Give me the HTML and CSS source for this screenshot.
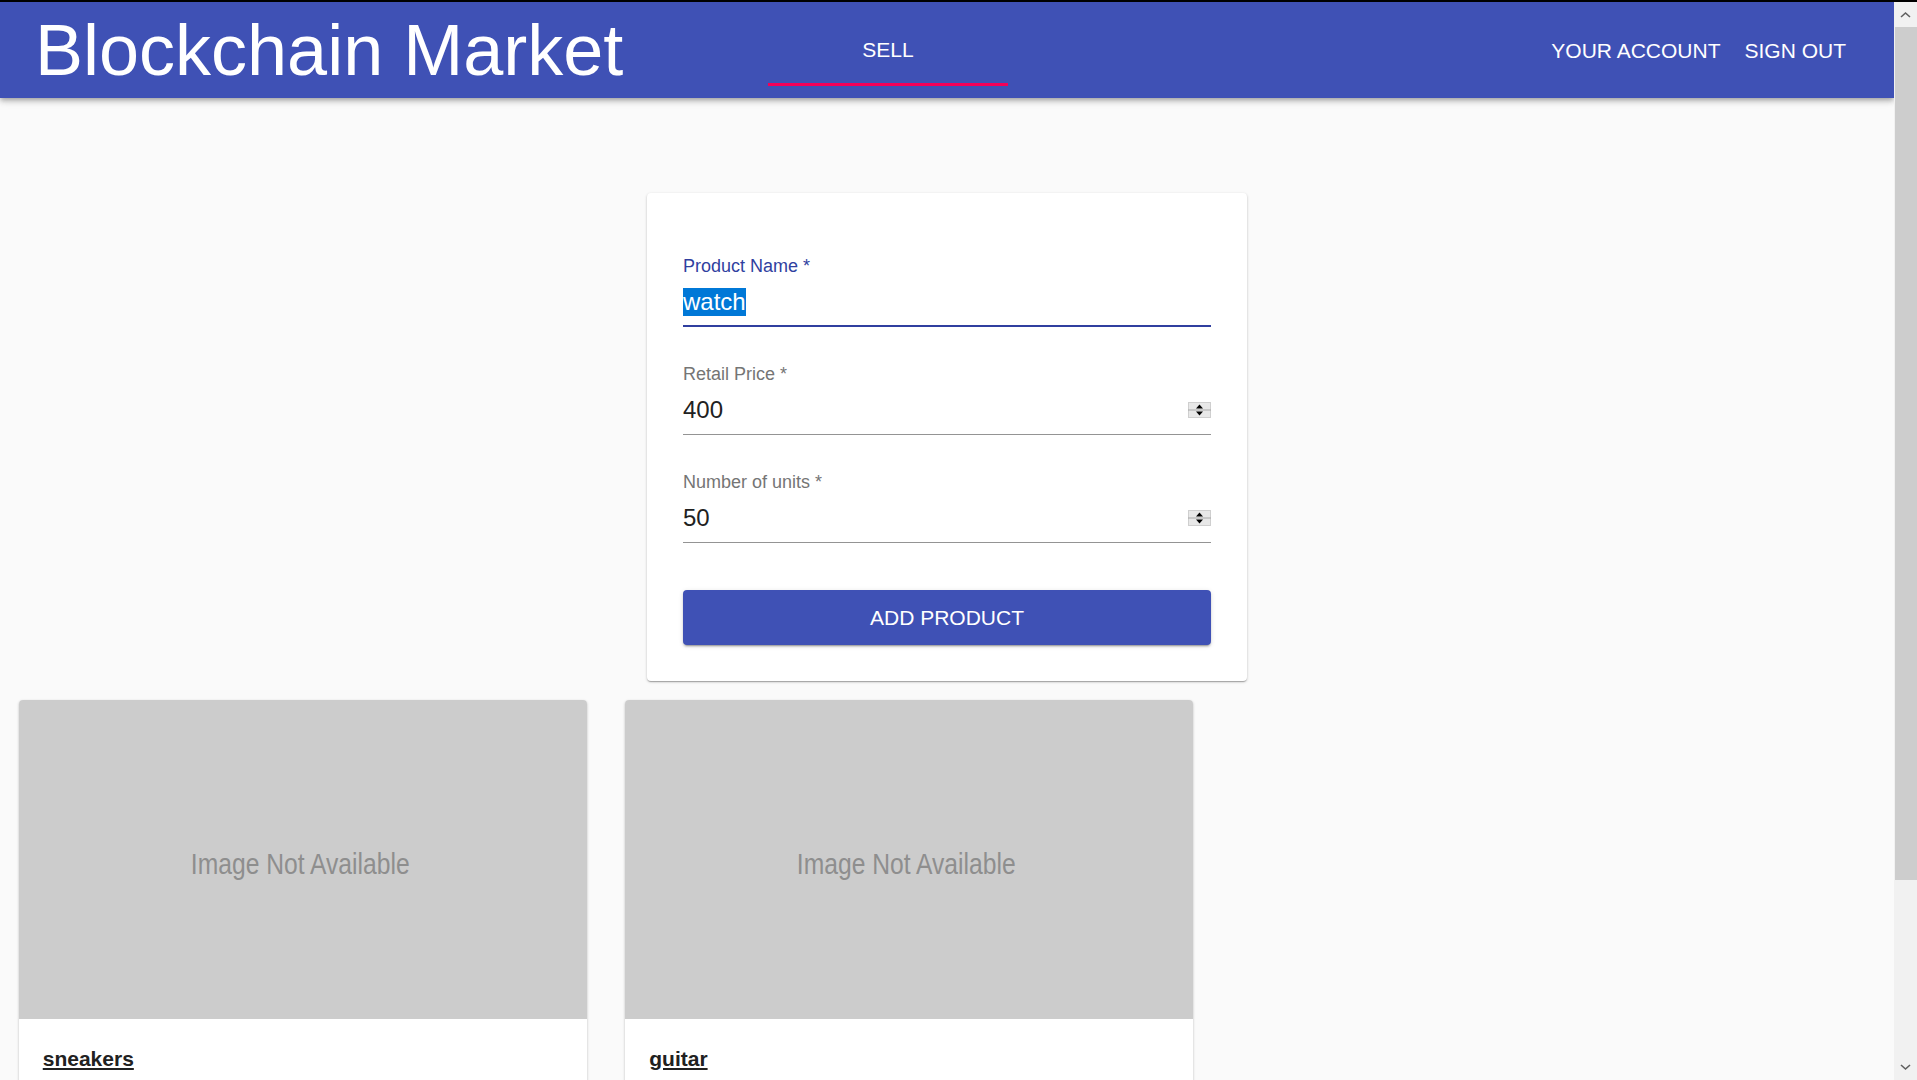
FILE: index.html
```html
<!DOCTYPE html>
<html lang="en">
<head>
<meta charset="utf-8">
<title>Blockchain Market</title>
<link rel="stylesheet" href="styles.css">
</head>
<body>
<div class="topline"></div>
<div class="window">
  <div class="page">
    <header class="appbar">
      <h1 class="brand">Blockchain Market</h1>
      <nav class="tabs"><a class="tab active" href="#">SELL</a></nav>
      <nav class="account"><a href="#">YOUR ACCOUNT</a><a href="#">SIGN OUT</a></nav>
    </header>
    <main class="content">
      <section class="form-card">
        <div class="field focused">
          <div class="label">Product Name *</div>
          <div class="input"><span class="selected">watch</span></div>
        </div>
        <div class="field">
          <div class="label">Retail Price *</div>
          <div class="input"><span>400</span>
            <svg class="spin" width="23" height="16" viewBox="0 0 23 16"><rect x="0" y="0" width="23" height="16" fill="#e8e8e8"/><rect x="0.5" y="0.5" width="22" height="15" fill="none" stroke="#cfcfcf"/><line x1="0" y1="8" x2="23" y2="8" stroke="#a8a8a8"/><path d="M11.5 2.5 L15 6.5 L8 6.5 Z" fill="#000"/><path d="M8 9.5 L15 9.5 L11.5 13.5 Z" fill="#000"/></svg>
          </div>
        </div>
        <div class="field">
          <div class="label">Number of units *</div>
          <div class="input"><span>50</span>
            <svg class="spin" width="23" height="16" viewBox="0 0 23 16"><rect x="0" y="0" width="23" height="16" fill="#e8e8e8"/><rect x="0.5" y="0.5" width="22" height="15" fill="none" stroke="#cfcfcf"/><line x1="0" y1="8" x2="23" y2="8" stroke="#a8a8a8"/><path d="M11.5 2.5 L15 6.5 L8 6.5 Z" fill="#000"/><path d="M8 9.5 L15 9.5 L11.5 13.5 Z" fill="#000"/></svg>
          </div>
        </div>
        <button class="submit" type="button">ADD PRODUCT</button>
      </section>
      <section class="products">
        <article class="product">
          <div class="placeholder"><span>Image Not Available</span></div>
          <div class="product-body"><a href="#" class="product-name">sneakers</a></div>
        </article>
        <article class="product">
          <div class="placeholder"><span>Image Not Available</span></div>
          <div class="product-body"><a href="#" class="product-name">guitar</a></div>
        </article>
      </section>
    </main>
  </div>
  <div class="scrollbar">
    <div class="sb-btn"><svg width="23" height="25" viewBox="0 0 23 25"><path d="M7 15 L11.5 11 L16 15" fill="none" stroke="#606060" stroke-width="1.6"/></svg></div>
    <div class="sb-thumb"></div>
    <div class="sb-track"></div>
    <div class="sb-btn"><svg width="23" height="25" viewBox="0 0 23 25"><path d="M7 10 L11.5 14 L16 10" fill="none" stroke="#606060" stroke-width="1.6"/></svg></div>
  </div>
</div>
</body>
</html>
```

FILE: styles.css
```css
html, body {
  margin: 0;
  height: 100%;
  overflow: hidden;
}

body {
  font-family: "Liberation Sans", Arial, sans-serif;
  background: #000;
}

.topline {
  height: 2px;
  background: #000;
}

.window {
  display: flex;
  height: 1078px;
}

.page {
  flex: 1;
  min-width: 0;
  background: #fafafa;
  overflow: hidden;
  display: flex;
  flex-direction: column;
}

.appbar {
  position: relative;
  z-index: 1;
  flex-shrink: 0;
  height: 96px;
  box-sizing: border-box;
  padding-left: 35px;
  display: flex;
  align-items: flex-start;
  background: #3f51b5;
  color: #fff;
  box-shadow: 0 2px 4px -1px rgba(0,0,0,0.2), 0 4px 5px 0 rgba(0,0,0,0.14), 0 1px 10px 0 rgba(0,0,0,0.12);
}

.brand {
  margin: 12px 0 0;
  width: 733px;
  flex-shrink: 0;
  font-size: 72px;
  line-height: 72px;
  font-weight: normal;
  white-space: nowrap;
}

.tabs {
  display: flex;
  margin-top: 12px;
}

.tab {
  width: 240px;
  height: 72px;
  box-sizing: border-box;
  padding-top: 24px;
  text-align: center;
  font-size: 21px;
  line-height: 24px;
  color: #fff;
  text-decoration: none;
  border-bottom: 3px solid #f50057;
}

.account {
  margin-left: auto;
  margin-top: 37px;
  padding-right: 48px;
  display: flex;
  gap: 24px;
}

.account a {
  color: #fff;
  text-decoration: none;
  font-size: 21px;
  line-height: 24px;
  white-space: nowrap;
}

.content {
  flex: 1;
}

.form-card {
  width: 600px;
  box-sizing: border-box;
  margin: 95px auto 0;
  padding: 63px 36px 36px 36px;
  background: #fff;
  border-radius: 4px;
  box-shadow: 0 1px 3px 0 rgba(0,0,0,0.2), 0 1px 1px 0 rgba(0,0,0,0.14), 0 2px 1px -1px rgba(0,0,0,0.12);
}

.field + .field {
  margin-top: 37px;
}

.label {
  font-size: 18px;
  line-height: 21px;
  color: #757575;
}

.field.focused .label {
  color: #303f9f;
}

.input {
  display: flex;
  align-items: center;
  justify-content: space-between;
  padding: 11px 0 10px;
  border-bottom: 1px solid #949494;
  font-size: 24px;
  line-height: 28px;
  color: #212121;
}

.field.focused .input {
  padding-bottom: 9px;
  border-bottom: 2px solid #303f9f;
}

.selected {
  background: #0078d7;
  color: #fff;
}

.spin {
  display: block;
  flex-shrink: 0;
}

.submit {
  display: block;
  width: 100%;
  height: 55px;
  margin-top: 47px;
  padding: 0;
  border: 0;
  border-radius: 4px;
  background: #3f51b5;
  color: #fff;
  font-family: inherit;
  font-size: 21px;
  box-shadow: 0 3px 1px -2px rgba(0,0,0,0.2), 0 2px 2px 0 rgba(0,0,0,0.14), 0 1px 5px 0 rgba(0,0,0,0.12);
}

.products {
  display: flex;
  gap: 38.5px;
  padding: 0 18.75px;
  margin-top: 18.5px;
}

.product {
  width: 568px;
  flex-shrink: 0;
  background: #fff;
  border-radius: 4px;
  overflow: hidden;
  box-shadow: 0 1px 3px 0 rgba(0,0,0,0.2), 0 1px 1px 0 rgba(0,0,0,0.14), 0 2px 1px -1px rgba(0,0,0,0.12);
}

.placeholder {
  height: 319px;
  background: #cccccc;
  display: flex;
  align-items: center;
  justify-content: center;
}

.placeholder span {
  padding: 10px 7px 0 0;
  font-size: 29px;
  color: #8e8e8e;
  transform: scaleX(0.85);
  white-space: nowrap;
}

.product-body {
  height: 150px;
  padding: 27px 24px;
}

.product-name {
  font-size: 21px;
  line-height: 25px;
  font-weight: bold;
  color: #212121;
  text-decoration: underline;
}

.scrollbar {
  width: 23px;
  flex-shrink: 0;
  display: flex;
  flex-direction: column;
  background: #f1f1f1;
}

.sb-btn {
  height: 25px;
  flex-shrink: 0;
}

.sb-btn svg {
  display: block;
}

.sb-thumb {
  height: 853px;
  margin-left: 1px;
  background: #cdcdcd;
}

.sb-track {
  flex: 1;
}
```
